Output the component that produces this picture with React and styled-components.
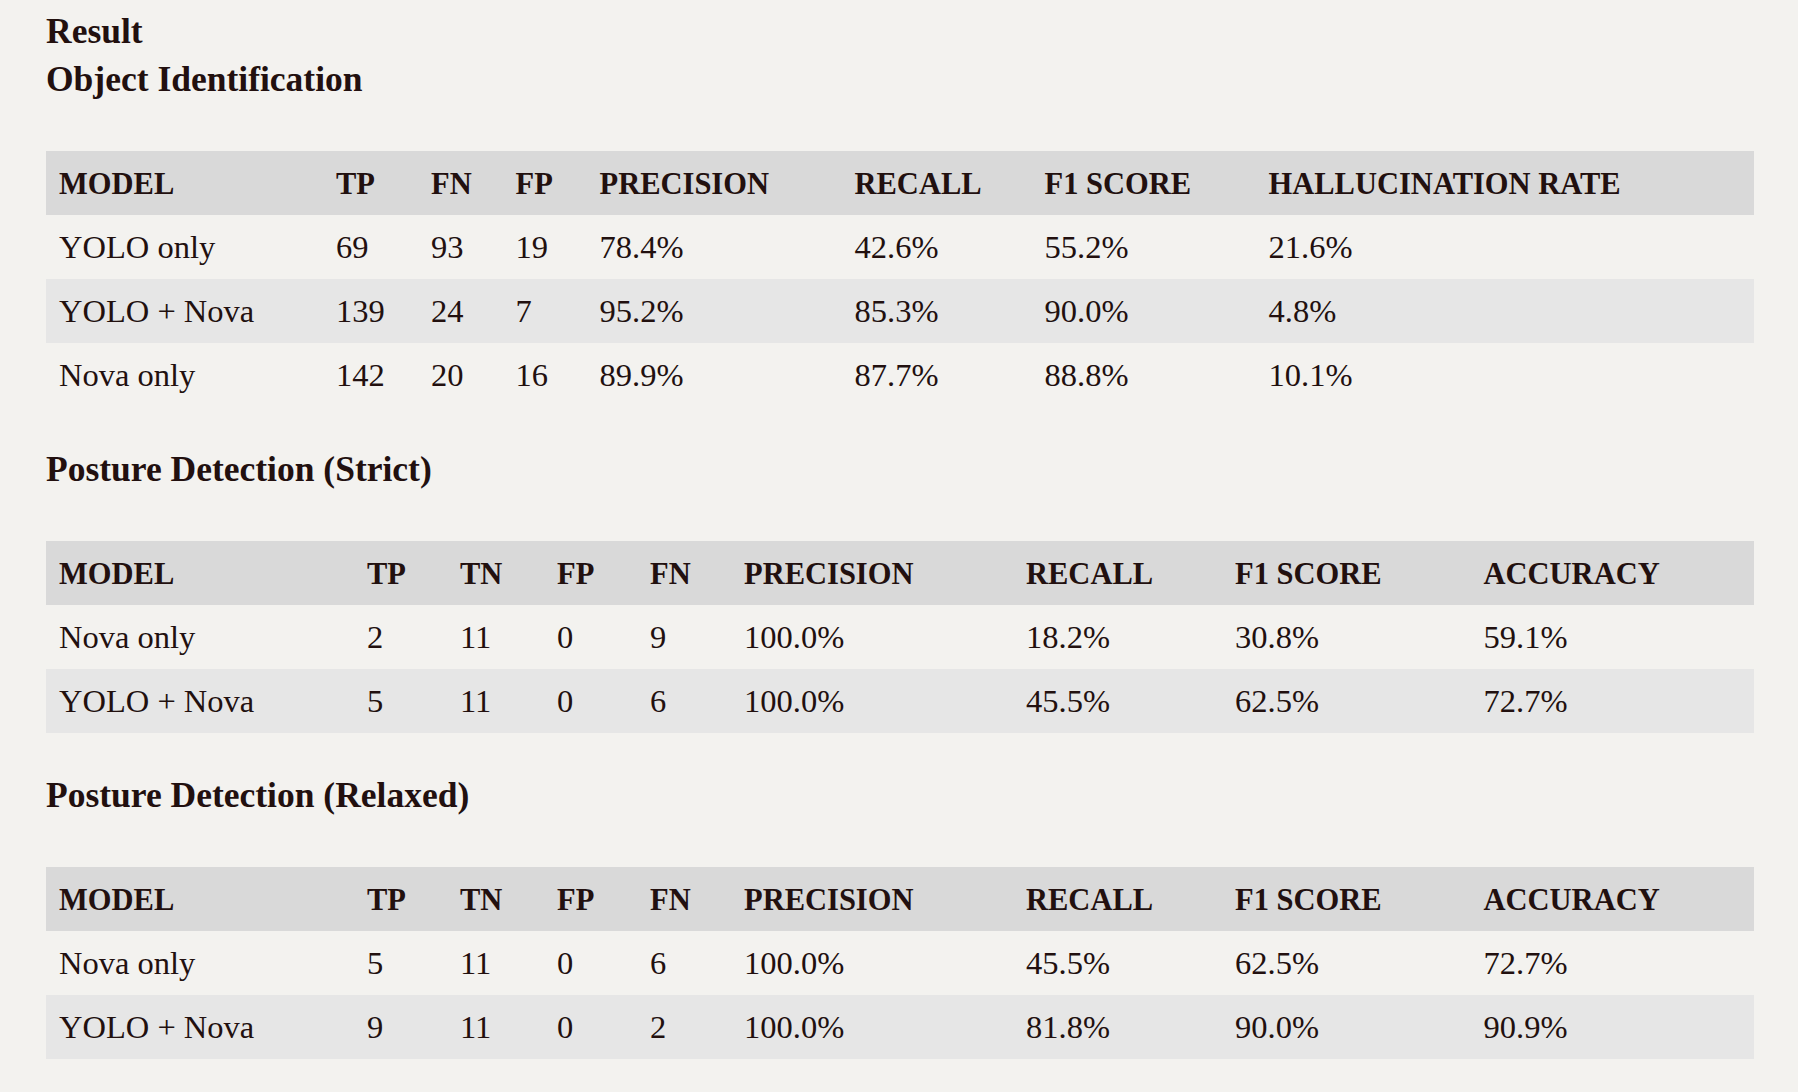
import React from 'react';
import styled, { createGlobalStyle } from 'styled-components';

const GlobalStyle = createGlobalStyle`
  html, body {
    margin: 0;
    padding: 0;
    background: #f3f2ef;
  }
  body {
    font-family: "Liberation Serif", "Times New Roman", serif;
    color: #22100f;
  }
`;

const Page = styled.div`
  padding: 7px 44px 0 46px;
`;

const Title = styled.h1`
  margin: 0;
  font-size: 35.5px;
  line-height: 48px;
  font-weight: 700;
`;

const SectionTitle = styled.h2`
  margin: ${(p) => (p.first ? '0' : '38px')} 0 48px;
  font-size: 35.5px;
  line-height: 48px;
  font-weight: 700;
`;

const Grid = styled.div`
  display: grid;
  grid-template-columns: ${(p) => p.cols};
`;

const HeadCell = styled.div`
  background: #d9d9d9;
  height: 64px;
  box-sizing: border-box;
  padding: 3px 0 0 13px;
  line-height: 61px;
  font-size: 30.5px;
  font-weight: 700;
  white-space: nowrap;
`;

const Cell = styled.div`
  background: ${(p) => (p.striped ? '#e6e6e6' : 'transparent')};
  height: 64px;
  padding-left: 13px;
  line-height: 64px;
  font-size: 32.5px;
  white-space: nowrap;
`;

const objectCols = '277px 95px 84.5px 84px 255px 190px 224px 1fr';
const postureCols = '308px 93px 97px 93px 94px 282px 209px 248.5px 1fr';

const objectHead = ['MODEL', 'TP', 'FN', 'FP', 'PRECISION', 'RECALL', 'F1 SCORE', 'HALLUCINATION RATE'];
const postureHead = ['MODEL', 'TP', 'TN', 'FP', 'FN', 'PRECISION', 'RECALL', 'F1 SCORE', 'ACCURACY'];

const objectRows = [
  ['YOLO only', '69', '93', '19', '78.4%', '42.6%', '55.2%', '21.6%'],
  ['YOLO + Nova', '139', '24', '7', '95.2%', '85.3%', '90.0%', '4.8%'],
  ['Nova only', '142', '20', '16', '89.9%', '87.7%', '88.8%', '10.1%'],
];

const strictRows = [
  ['Nova only', '2', '11', '0', '9', '100.0%', '18.2%', '30.8%', '59.1%'],
  ['YOLO + Nova', '5', '11', '0', '6', '100.0%', '45.5%', '62.5%', '72.7%'],
];

const relaxedRows = [
  ['Nova only', '5', '11', '0', '6', '100.0%', '45.5%', '62.5%', '72.7%'],
  ['YOLO + Nova', '9', '11', '0', '2', '100.0%', '81.8%', '90.0%', '90.9%'],
];

function ResultTable({ cols, head, rows }) {
  return (
    <Grid cols={cols}>
      {head.map((h) => (
        <HeadCell key={h}>{h}</HeadCell>
      ))}
      {rows.map((row, i) =>
        row.map((v, j) => (
          <Cell key={i + '-' + j} striped={i % 2 === 1}>
            {v}
          </Cell>
        ))
      )}
    </Grid>
  );
}

export default function App() {
  return (
    <Page>
      <GlobalStyle />
      <Title>Result</Title>
      <SectionTitle first>Object Identification</SectionTitle>
      <ResultTable cols={objectCols} head={objectHead} rows={objectRows} />
      <SectionTitle>Posture Detection (Strict)</SectionTitle>
      <ResultTable cols={postureCols} head={postureHead} rows={strictRows} />
      <SectionTitle>Posture Detection (Relaxed)</SectionTitle>
      <ResultTable cols={postureCols} head={postureHead} rows={relaxedRows} />
    </Page>
  );
}
